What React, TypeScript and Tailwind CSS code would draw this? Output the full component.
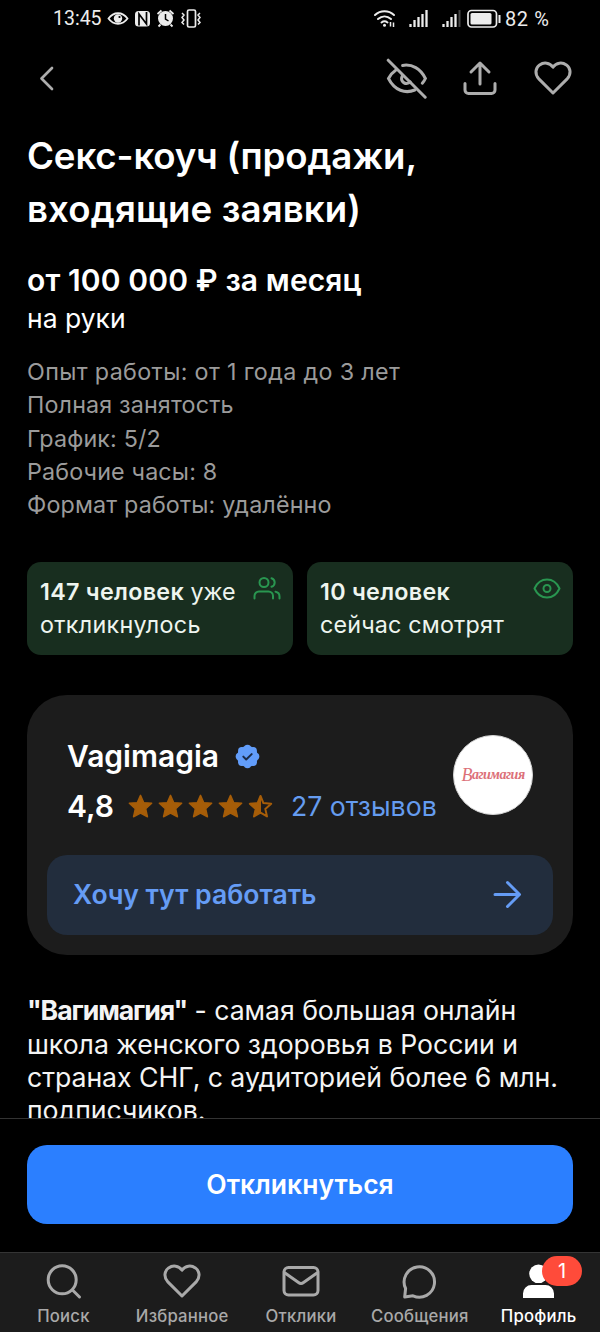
import type { ReactNode } from "react";
import clsx from "clsx";

const DETAILS = [
  "Полная занятость",
  "График: 5/2",
  "Рабочие часы: 8",
  "Формат работы: удалённо",
];

const STAR_PATH =
  "M12.500 1.300l3.200 7.300 8 .7-6 5.400 1.800 8.100-7-3.600-7 3.600 1.800-8.100-6-5.400 8-.7z";

const HEART_PATH =
  "M19 33 4.600 18.600C.6 14.100 1.300 8 5.600 4.900 10 1.900 15.600 2.700 19 7.200 22.400 2.700 28 1.900 32.400 4.900 36.700 8 37.400 14.100 33.400 18.600Z";

function StatusBar() {
  return (
    <div className="flex h-9 items-center justify-between pt-[2px] pr-[50px] pl-[53px] text-[#ececec]">
      <div className="flex items-center">
        <span className="w-[54px] font-['Roboto',sans-serif] text-[19.5px] leading-none whitespace-nowrap">
          13:45
        </span>
        <svg width="100" height="22" viewBox="107 8 100 22" fill="none">
          <path
            d="M108.500 18.500c5-7 14-7 19 0c-5 7-14 7-19 0z"
            stroke="currentColor"
            strokeWidth="1.800"
          />
          <circle cx="118" cy="18.500" r="4.200" fill="currentColor" />
          <circle cx="119.500" cy="17" r="1.100" fill="#000" />
          <rect x="135" y="11" width="15" height="15.500" rx="3.500" fill="currentColor" />
          <path d="M139 25.500V14l7.500 10V12" stroke="#000" strokeWidth="1.700" />
          <circle cx="165.500" cy="18.500" r="7.500" fill="currentColor" />
          <path
            d="m157.500 14 4-3.500m8 0 4 3.500M160.500 24.500l-2 2m12-2 2 2"
            stroke="currentColor"
            strokeWidth="1.800"
          />
          <path d="M165.500 14v5l3 2" stroke="#000" strokeWidth="1.500" />
          <rect x="187.500" y="10" width="8" height="17" rx="1.500" stroke="currentColor" strokeWidth="1.700" />
          <path
            d="m182 13 2 2-2 2.500 2 2.500-2 2.500 2 2m16-11.500-2 2 2 2.500-2 2.500 2 2.500-2 2"
            stroke="currentColor"
            strokeWidth="1.500"
          />
        </svg>
      </div>
      <div className="flex items-center">
        <svg width="131" height="22" viewBox="373 8 131 22" fill="none">
          <g stroke="currentColor" strokeWidth="2" strokeLinecap="round">
            <path d="M375 15c5.500-5 13.500-5 19 0" />
            <path d="M378 19c4-3.500 9-3.500 13 0" />
            <path d="M381.500 22.500c2-1.600 4-1.600 6 0" />
          </g>
          <circle cx="384.500" cy="25.300" r="1.500" fill="currentColor" />
          <path d="M390.500 22v4.500m3-4v4.500" stroke="currentColor" strokeWidth="1.500" />
          <path
            d="M410.500 24v3m4-7v7m4-10v10m4-13v13m4-17v17"
            stroke="currentColor"
            strokeWidth="2.300"
          />
          <path d="M443.500 24v3m4-6v6m4-10v10m4-13v13" stroke="currentColor" strokeWidth="2.300" />
          <path d="M459.500 10v17" stroke="#444" strokeWidth="2" />
          <rect x="468" y="10.500" width="28.500" height="16.500" rx="3.500" stroke="currentColor" strokeWidth="1.700" />
          <rect x="470.500" y="13" width="21" height="11.500" rx="1.500" fill="currentColor" />
          <path d="M499.500 15v8" stroke="currentColor" strokeWidth="2" />
        </svg>
        <span className="w-[46px] pl-px font-['Roboto',sans-serif] text-[20px] leading-none tracking-[0.6px] whitespace-nowrap">
          82 %
        </span>
      </div>
    </div>
  );
}

function TopBar() {
  return (
    <header className="flex h-[84px] items-center justify-between pr-[28px] pl-[38px] text-[#adadad]">
      <button type="button" aria-label="Назад">
        <svg width="18" height="26" viewBox="0 0 18 26" fill="none" stroke="currentColor" strokeWidth="2.700" strokeLinecap="round" strokeLinejoin="round">
          <path d="M14 3 3.500 13.500 14 24" />
        </svg>
      </button>
      <div className="flex items-center gap-[32px]">
        <button type="button" aria-label="Скрыть">
          <svg width="42" height="42" viewBox="386 57 42 42" fill="none" stroke="currentColor" strokeWidth="3" strokeLinecap="round">
            <path d="m388.200 60.200 37 37" />
            <path d="M395.700 70.200c-3 2-5.500 4.800-7.200 8.300 6 12 17 15.500 26.300 11.500" />
            <path d="M402.600 65.400c9.400-1.600 18 3.200 22.800 13.100-.8 1.800-1.900 3.400-3.100 4.700" />
            <path d="M402.300 75.800c-2 4 .6 7.700 4.300 7.700 1.500 0 2.800-.6 3.600-1.600" />
          </svg>
        </button>
        <button type="button" aria-label="Поделиться" className="mr-[2px]">
          <svg width="40" height="40" viewBox="460 58 40 40" fill="none" stroke="currentColor" strokeWidth="3" strokeLinecap="round" strokeLinejoin="round">
            <path d="M480 84V63.500m-9 8.500 9-9 9 9M465 83.500V90a3.500 3.500 0 0 0 3.500 3.500h23A3.500 3.500 0 0 0 495 90v-6.500" />
          </svg>
        </button>
        <button type="button" aria-label="В избранное">
          <svg width="38" height="36" viewBox="0 0 38 36" fill="none" stroke="currentColor" strokeWidth="3" strokeLinejoin="round">
            <path d={HEART_PATH} />
          </svg>
        </button>
      </div>
    </header>
  );
}

function StatCard({ icon, children }: { icon: ReactNode; children: ReactNode }) {
  return (
    <div className="flex h-[93px] flex-1 items-start justify-between rounded-[14px] bg-[#182e1f] pt-[13px] pr-[12px] pl-[13px] text-[#eef5ef]">
      <p className="text-[23.3px] leading-[33px] whitespace-nowrap">{children}</p>
      <span className="-ml-4 text-[#299650]">{icon}</span>
    </div>
  );
}

function Stars() {
  return (
    <div className="flex gap-[5px] text-[#a65d08]">
      {[0, 1, 2, 3].map((i) => (
        <svg key={i} width="25" height="25" viewBox="0 0 25 25" fill="currentColor" stroke="currentColor" strokeWidth="1.400" strokeLinejoin="round">
          <path d={STAR_PATH} />
        </svg>
      ))}
      <svg width="25" height="25" viewBox="0 0 25 25" fill="none" stroke="currentColor" strokeWidth="2" strokeLinejoin="round">
        <path d="M12.500 2l2.900 7.100 7.800.7-5.900 5.100 1.700 7.500-6.500-3.700-6.500 3.700 1.700-7.500-5.900-5.100 7.800-.7z" />
        <path d="M13 2v16.700l-7 3.700 1.700-7.500-5.900-5.100 7.800-.7z" fill="currentColor" stroke="none" />
      </svg>
    </div>
  );
}

function VerifiedBadge() {
  return (
    <svg width="25" height="25" viewBox="0 0 25 25" fill="none">
      <g fill="#629dfa">
        <circle cx="12.500" cy="12.500" r="10.500" />
        <circle cx="12.500" cy="4.400" r="3.700" />
        <circle cx="18.200" cy="6.800" r="3.700" />
        <circle cx="20.600" cy="12.500" r="3.700" />
        <circle cx="18.200" cy="18.200" r="3.700" />
        <circle cx="12.500" cy="20.600" r="3.700" />
        <circle cx="6.800" cy="18.200" r="3.700" />
        <circle cx="4.400" cy="12.500" r="3.700" />
        <circle cx="6.800" cy="6.800" r="3.700" />
      </g>
      <path d="m8.300 12.600 2.900 2.900 5.500-5.400" stroke="#1c2c48" strokeWidth="2" strokeLinecap="round" strokeLinejoin="round" />
    </svg>
  );
}

function CompanyCard() {
  return (
    <section className="mt-10 h-[260px] rounded-[40px] bg-[#1c1c1c] px-5 pt-10">
      <div className="flex h-20 justify-between px-5">
        <div className="whitespace-nowrap">
          <div className="flex h-[43px] items-center gap-[16px]">
            <h2 className="text-[30px] font-semibold">Vagimagia</h2>
            <VerifiedBadge />
          </div>
          <div className="mt-[8px] flex h-10 items-center">
            <span className="w-[61px] text-[30px] font-semibold">4,8</span>
            <Stars />
            <a className="ml-[18px] text-[26.67px] text-[#659cf0]">27 отзывов</a>
          </div>
        </div>
        <div className="-ml-4 flex size-20 shrink-0 items-center justify-center rounded-full border border-[#d5d5d5] bg-white font-['Liberation_Serif',serif] text-[14px] leading-none font-bold tracking-[-0.5px] text-[#dc7078] italic">
          <span className="text-[18px] font-normal">В</span>агимагия
        </div>
      </div>
      <button
        type="button"
        className="mt-10 flex h-20 w-full items-center justify-between rounded-[20px] bg-[#222d3d] pr-[31px] pb-[2px] pl-[26px] text-[26.6px] font-semibold text-[#659cf5]"
      >
        Хочу тут работать
        <svg width="30" height="30" viewBox="0 0 30 30" fill="none" stroke="currentColor" strokeWidth="3" strokeLinecap="round" strokeLinejoin="round">
          <path d="M3 15.500h24M15.500 3.500l12 12-12 12" />
        </svg>
      </button>
    </section>
  );
}

function Description() {
  return (
    <p className="mt-[39px] text-[26.67px] leading-[33.3px] tracking-[-0.05px] whitespace-nowrap text-[#f4f4f4]">
      <b className="font-bold tracking-[-1.1px]">"Вагимагия"</b> - самая большая онлайн
      <br />
      школа женского здоровья в России и
      <br />
      странах СНГ, с аудиторией более 6 млн.
      <br />
      подписчиков.
    </p>
  );
}

function NavItem({
  label,
  active,
  children,
}: {
  label: string;
  active?: boolean;
  children: ReactNode;
}) {
  return (
    <button
      type="button"
      className={clsx(
        "relative flex flex-1 flex-col items-center pt-[9px]",
        active ? "text-white" : "text-[#a9a9a9]",
      )}
    >
      <svg width="40" height="40" viewBox="0 0 40 40" fill="none" stroke="currentColor" strokeWidth="3" strokeLinecap="round" strokeLinejoin="round">
        {children}
      </svg>
      <span className="mt-[2px] text-[16.7px] leading-6 font-medium tracking-[0.2px] whitespace-nowrap">
        {label}
      </span>
      {active && (
        <span className="absolute top-[3px] right-[16px] flex h-[30px] w-10 items-center justify-center rounded-full bg-[#ff4b3a] text-[20px] text-white">
          1
        </span>
      )}
    </button>
  );
}

function BottomNav() {
  return (
    <nav className="flex h-20 shrink-0 border-t border-[#343434] bg-[#1c1c1c] pr-[2px] pl-[4px]">
      <NavItem label="Поиск">
        <circle cx="19.200" cy="17.800" r="14" />
        <path d="m29.500 28 7 7" />
      </NavItem>
      <NavItem label="Избранное">
        <path transform="translate(1 1)" d={HEART_PATH} />
      </NavItem>
      <NavItem label="Отклики">
        <rect x="3" y="5.500" width="34" height="27.500" rx="4.500" />
        <path d="M4 11 17.500 20.500a4 4 0 0 0 5 0L36 11" />
      </NavItem>
      <NavItem label="Сообщения">
        <path d="M4.700 35 5.600 26.500A15.200 15.200 0 1 1 13 33.800z" />
      </NavItem>
      <NavItem label="Профиль" active>
        <g fill="currentColor" stroke="none">
          <circle cx="19.500" cy="11.800" r="9.300" />
          <path d="M4 36v-4.500a8.500 8.500 0 0 1 8.500-8.500h14a8.500 8.500 0 0 1 8.500 8.500V36z" />
        </g>
      </NavItem>
    </nav>
  );
}

export default function App() {
  return (
    <div className="flex h-[1332px] w-[600px] flex-col overflow-hidden bg-black font-['Inter',sans-serif] text-white">
      <div className="h-[1118px] shrink-0 overflow-hidden">
        <StatusBar />
        <TopBar />
        <main className="px-[27px] pt-[9px]">
          <h1 className="text-[36.67px] leading-[53px] font-semibold whitespace-nowrap">
            <span className="tracking-[-0.15px]">Секс-коуч (продажи,</span>
            <br />
            <span className="tracking-[0.12px]">входящие заявки)</span>
          </h1>
          <p className="mt-[25px] text-[30px] leading-10 font-semibold tracking-[0.12px] whitespace-nowrap">
            от 100 000 ₽ за месяц
          </p>
          <p className="mt-[2px] text-[26.5px] leading-[33px]">на руки</p>
          <ul className="mt-5 text-[23.3px] leading-[33.3px] tracking-[0.15px] text-[#9b9b9b]">
            <li className="tracking-[0.35px]">Опыт работы: от 1 года до 3 лет</li>
            {DETAILS.map((line) => (
              <li key={line}>{line}</li>
            ))}
          </ul>
          <div className="mt-[41px] flex gap-[14px]">
            <StatCard
              icon={
                <svg width="28" height="28" viewBox="0 0 28 28" fill="none" stroke="currentColor" strokeWidth="2" strokeLinecap="round">
                  <circle cx="11" cy="7.500" r="4.500" />
                  <path d="M1.500 23.500V21a4.500 4.500 0 0 1 4.500-4.500h9.500A4.500 4.500 0 0 1 20 21v2.500M18.500 3.200a4.500 4.500 0 0 1 0 8.600M22.500 16.700a4.800 4.800 0 0 1 4 4.800v2" />
                </svg>
              }
            >
              <b className="font-semibold tracking-[0.3px]">147 человек</b> уже
              <br />
              <span className="tracking-[0.3px]">откликнулось</span>
            </StatCard>
            <StatCard
              icon={
                <svg width="28" height="28" viewBox="0 0 28 28" fill="none" stroke="currentColor" strokeWidth="2">
                  <path d="M1.500 13.500C7 1.500 21 1.500 26.500 13.500 21 25.500 7 25.500 1.500 13.500z" strokeLinejoin="round" />
                  <circle cx="14" cy="13.500" r="3.500" />
                </svg>
              }
            >
              <b className="font-semibold tracking-[0.3px]">10 человек</b>
              <br />
              <span className="tracking-[0.18px]">сейчас смотрят</span>
            </StatCard>
          </div>
          <CompanyCard />
          <Description />
        </main>
      </div>
      <div className="h-[134px] shrink-0 border-t border-[#333] px-[27px] pt-[26px]">
        <button
          type="button"
          className="h-[79px] w-full rounded-[20px] bg-[#2b7fff] text-[26.5px] font-semibold"
        >
          Откликнуться
        </button>
      </div>
      <BottomNav />
    </div>
  );
}
